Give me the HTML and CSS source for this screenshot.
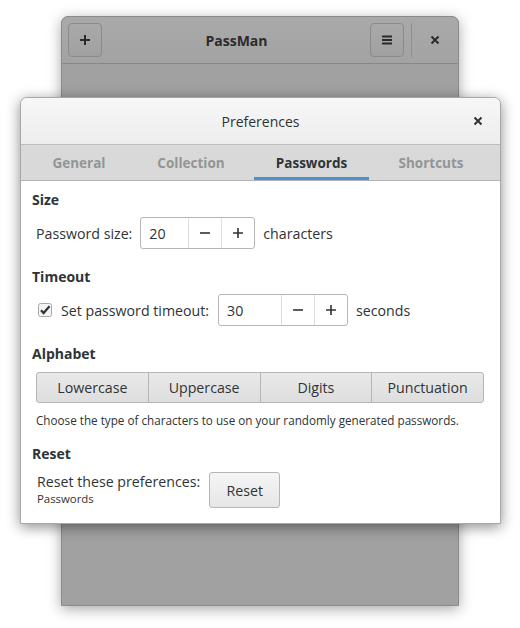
FILE: index.html
```html
<!DOCTYPE html>
<html>
<head>
<meta charset="utf-8">
<link rel="stylesheet" href="styles.css">
</head>
<body>
<div class="desk">
  <div class="main-win">
    <div class="main-head">
      <button class="hbtn add"><svg width="12" height="12" viewBox="0 0 12 12"><path d="M6 1v10M1 6h10" stroke="#2b2b2b" stroke-width="2"/></svg></button>
      <div class="main-title">PassMan</div>
      <button class="hbtn menu"><svg width="12" height="12" viewBox="0 0 12 12"><path d="M1 2.5h10M1 6h10M1 9.5h10" stroke="#2b2b2b" stroke-width="2"/></svg></button>
      <div class="sep"></div>
      <div class="hclose"><svg width="10" height="10" viewBox="0 0 10 10"><path d="M1.5 1.5l7 7M8.5 1.5l-7 7" stroke="#2b2b2b" stroke-width="2"/></svg></div>
    </div>
    <div class="main-body"></div>
  </div>

  <div class="dialog">
    <div class="dlg-head">
      <div class="dlg-title">Preferences</div>
      <div class="dlg-close"><svg width="10" height="10" viewBox="0 0 10 10"><path d="M1.5 1.5l7 7M8.5 1.5l-7 7" stroke="#2e3436" stroke-width="2"/></svg></div>
    </div>
    <div class="tabs">
      <div class="tab t1">General</div>
      <div class="tab t2">Collection</div>
      <div class="tab t3 active">Passwords</div>
      <div class="tab t4">Shortcuts</div>
    </div>
    <div class="content">
      <div class="heading">Size</div>
      <div class="row">
        <span class="label">Password size:</span>
        <div class="spin">
          <div class="spin-entry e1">20</div>
          <div class="spin-btn"><svg width="12" height="12" viewBox="0 0 12 12"><path d="M1 6h10" stroke="#2e3436" stroke-width="1.6"/></svg></div>
          <div class="spin-btn"><svg width="12" height="12" viewBox="0 0 12 12"><path d="M6 1v10M1 6h10" stroke="#2e3436" stroke-width="1.6"/></svg></div>
        </div>
        <span class="label after">characters</span>
      </div>

      <div class="heading gap">Timeout</div>
      <div class="row">
        <span class="check"><svg width="14" height="14" viewBox="0 0 14 14"><rect x="0.5" y="0.5" width="13" height="13" rx="2" fill="#f4f4f4" stroke="#a8a8a8"/><path d="M3 7.2l2.6 2.8L11.5 3.2" fill="none" stroke="#2e3436" stroke-width="2.2"/></svg></span>
        <span class="label">Set password timeout:</span>
        <div class="spin">
          <div class="spin-entry e2">30</div>
          <div class="spin-btn"><svg width="12" height="12" viewBox="0 0 12 12"><path d="M1 6h10" stroke="#2e3436" stroke-width="1.6"/></svg></div>
          <div class="spin-btn"><svg width="12" height="12" viewBox="0 0 12 12"><path d="M6 1v10M1 6h10" stroke="#2e3436" stroke-width="1.6"/></svg></div>
        </div>
        <span class="label after">seconds</span>
      </div>

      <div class="heading gap">Alphabet</div>
      <div class="linked">
        <div class="lbtn">Lowercase</div>
        <div class="lbtn">Uppercase</div>
        <div class="lbtn">Digits</div>
        <div class="lbtn">Punctuation</div>
      </div>
      <div class="help">Choose the type of characters to use on your randomly generated passwords.</div>

      <div class="heading gap2">Reset</div>
      <div class="reset-row">
        <div class="reset-text">
          <div class="label">Reset these preferences:</div>
          <div class="sub">Passwords</div>
        </div>
        <button class="reset-btn">Reset</button>
      </div>
    </div>
  </div>
</div>
</body>
</html>
```

FILE: styles.css
```css
* { box-sizing: border-box; }
html, body {
  margin: 0;
  padding: 0;
  background: #ffffff;
  width: 520px;
  height: 628px;
  overflow: hidden;
  font-family: "Open Sans", "Noto Sans", sans-serif;
  color: #2e3436;
}
.desk {
  position: relative;
  width: 520px;
  height: 628px;
}
.main-win {
  position: absolute;
  left: 61px;
  top: 16px;
  width: 398px;
  height: 590px;
  border: 1px solid #8a8a8a;
  border-radius: 7px 7px 0 0;
  background: #a1a1a1;
  box-shadow: 0 3px 14px rgba(0,0,0,0.35);
  display: flex;
  flex-direction: column;
}
.main-head {
  height: 47px;
  display: flex;
  align-items: center;
  padding: 0 0 0 6px;
  background: linear-gradient(#a9a9a9, #a3a3a3);
  border-bottom: 1px solid #878787;
  border-radius: 7px 7px 0 0;
}
.hbtn {
  width: 34px;
  height: 34px;
  border: 1px solid #8a8a8a;
  border-radius: 4px;
  background: linear-gradient(#a9a9a9, #a1a1a1);
  display: flex;
  align-items: center;
  justify-content: center;
  padding: 0;
}
.main-title {
  flex: 1;
  text-align: center;
  font-weight: bold;
  font-size: 14px;
  color: #2b2b2b;
  padding-left: 1px;
}
.sep {
  width: 1px;
  height: 34px;
  background: #8e8e8e;
  margin-left: 7px;
}
.hclose {
  width: 46px;
  display: flex;
  justify-content: center;
}
.main-body { flex: 1; }

.dialog {
  position: absolute;
  left: 20px;
  top: 97px;
  width: 481px;
  height: 427px;
  border: 1px solid #a8a8a8;
  border-radius: 7px 7px 0 0;
  background: #ffffff;
  box-shadow: 0 3px 14px rgba(0,0,0,0.45);
  display: flex;
  flex-direction: column;
}
.dlg-head {
  height: 47px;
  flex: none;
  display: flex;
  align-items: center;
  background: linear-gradient(#f7f7f7, #ededed);
  border-bottom: 1px solid #bdbdbd;
  border-radius: 7px 7px 0 0;
  position: relative;
}
.dlg-title {
  flex: 1;
  text-align: center;
  font-size: 14px;
  color: #2e3436;
}
.dlg-close {
  position: absolute;
  right: 17px;
  top: 18px;
  width: 10px;
  height: 10px;
  display: flex;
}
.tabs {
  height: 36px;
  flex: none;
  display: flex;
  background: #d9d9d9;
  border-bottom: 1px solid #b5b5b5;
}
.tab {
  font-weight: bold;
  font-size: 13.5px;
  color: #929595;
  display: flex;
  align-items: center;
  justify-content: center;
  border-bottom: 3px solid transparent;
  padding-top: 3px;
}
.t1 { width: 116px; }
.t2 { width: 108px; }
.t3 { width: 115px; margin-left: 9px; }
.t4 { width: 124px; }
.tab.active {
  color: #2e3436;
  border-bottom-color: #4a90d9;
}
.content {
  padding: 10px 11px 0 11px;
  font-size: 14.2px;
}
.heading {
  font-weight: bold;
  font-size: 14px;
  height: 18px;
  line-height: 18px;
}
.heading.gap { margin-top: 19px; }
.heading.gap2 { margin-top: 17px; }
.row {
  margin-top: 8px;
  height: 32px;
  display: flex;
  align-items: center;
  padding-left: 4px;
}
.label { white-space: nowrap; }
.check {
  display: flex;
  margin-left: 2px;
  margin-right: 9px;
}
.spin {
  margin-left: 8px;
  height: 32px;
  display: flex;
  border: 1px solid #b6b6b6;
  border-radius: 3px;
  background: #fff;
}
.check ~ .spin { margin-left: 9px; }
.spin-entry {
  display: flex;
  align-items: center;
  padding-left: 8px;
  font-size: 14.2px;
}
.e1 { width: 47px; }
.e2 { width: 62px; }
.spin-btn {
  width: 33px;
  border-left: 1px solid #dedede;
  display: flex;
  align-items: center;
  justify-content: center;
}
.after { margin-left: 8px; }
.linked {
  margin: 9px 0 0 4px;
  width: 448px;
  height: 31px;
  display: flex;
  border: 1px solid #b6b6b6;
  border-radius: 3px;
  background: linear-gradient(#e9e9e9, #dedede);
}
.lbtn {
  flex: 1;
  display: flex;
  align-items: center;
  justify-content: center;
}
.lbtn + .lbtn { border-left: 1px solid #b6b6b6; }
.help {
  margin: 9px 0 0 4px;
  font-size: 11.7px;
  line-height: 16px;
}
.reset-row {
  margin-top: 9px;
  display: flex;
  padding-left: 5px;
}
.reset-text {
  padding-top: 1px;
}
.reset-text .label { line-height: 18px; }
.sub {
  font-size: 11.4px;
  line-height: 16px;
}
.reset-btn {
  margin-left: 9px;
  width: 71px;
  height: 36px;
  border: 1px solid #b6b6b6;
  border-radius: 3px;
  background: linear-gradient(#f5f5f5, #e6e6e6);
  font-family: inherit;
  font-size: 14.2px;
  color: #2e3436;
  padding: 0;
}
```
